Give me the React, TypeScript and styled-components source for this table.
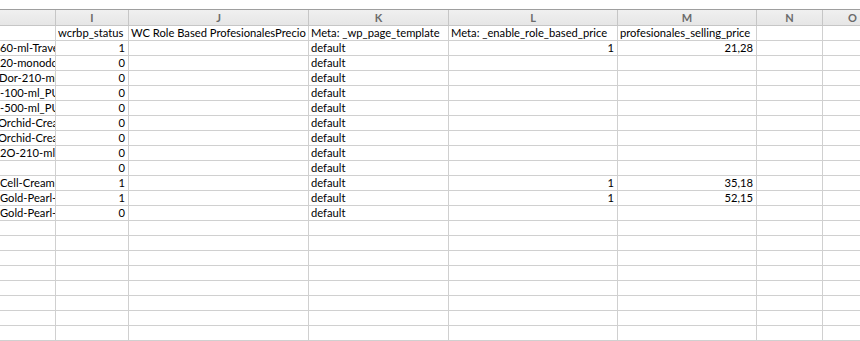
import React from 'react'
import styled, { createGlobalStyle } from 'styled-components'

const GlobalStyle = createGlobalStyle`
  html, body {
    margin: 0;
    padding: 0;
    background: #fff;
  }
`

const columns = [
  { key: 'H', width: 56 },
  { key: 'I', width: 73 },
  { key: 'J', width: 180 },
  { key: 'K', width: 140 },
  { key: 'L', width: 169 },
  { key: 'M', width: 139 },
  { key: 'N', width: 66 },
  { key: 'O', width: 60 },
]

type Cell = { text?: string; align?: 'left' | 'right'; shift?: number }

const fieldRow: Cell[] = [
  {},
  { text: 'wcrbp_status' },
  { text: 'WC Role Based ProfesionalesPrecio' },
  { text: 'Meta: _wp_page_template' },
  { text: 'Meta: _enable_role_based_price' },
  { text: 'profesionales_selling_price' },
  {},
  {},
]

// H column is scrolled, so its text is clipped on both sides
const data: [string, number, string, number | null, string | null, number][] = [
  ['60-ml-Travel', 1, 'default', 1, '21,28', -2],
  ['20-monodosis', 0, 'default', null, null, -2],
  ['Dor-210-ml-', 0, 'default', null, null, -3],
  ['-100-ml_PURE', 0, 'default', null, null, -2],
  ['-500-ml_PURE', 0, 'default', null, null, -2],
  ['Orchid-Cream', 0, 'default', null, null, -4],
  ['Orchid-Cream', 0, 'default', null, null, -4],
  ['2O-210-ml_PURE', 0, 'default', null, null, -2],
  ['', 0, 'default', null, null, -2],
  ['Cell-Cream-50', 1, 'default', 1, '35,18', -2],
  ['Gold-Pearl-30', 1, 'default', 1, '52,15', -2],
  ['Gold-Pearl-50', 0, 'default', null, null, -2],
]

const rows: Cell[][] = [
  fieldRow,
  ...data.map(([name, status, tpl, enable, price, shift]) => [
    { text: name, shift },
    { text: String(status), align: 'right' as const },
    {},
    { text: tpl },
    { text: enable === null ? undefined : String(enable), align: 'right' as const },
    { text: price ?? undefined, align: 'right' as const },
    {},
    {},
  ]),
  ...Array.from({ length: 9 }, () => columns.map(() => ({}))),
]

const App = () => {
  return (
    <>
      <GlobalStyle />
      <Sheet>
        <HeaderRow>
          {columns.map((c) => (
            <HeaderCell key={c.key} $w={c.width}>
              {c.key === 'H' ? '' : c.key}
            </HeaderCell>
          ))}
        </HeaderRow>
        {rows.map((row, ri) => (
          <Row key={ri}>
            {row.map((cell, ci) => (
              <DataCell key={ci} $w={columns[ci].width} $align={cell.align ?? 'left'}>
                {cell.text && <CellText $shift={cell.shift ?? 0}>{cell.text}</CellText>}
              </DataCell>
            ))}
          </Row>
        ))}
      </Sheet>
    </>
  )
}

export default App

const Sheet = styled.div`
  width: 860px;
  height: 341px;
  overflow: hidden;
  padding-top: 9px;
  box-sizing: border-box;
  font-family: Lato, 'Liberation Sans', sans-serif;
  font-size: 11.2px;
  color: #000;
`

const HeaderRow = styled.div`
  display: flex;
  height: 17px;
  box-sizing: border-box;
  border-top: 1px solid #9e9e9e;
  border-bottom: 1px solid #c6c6c6;
  background: linear-gradient(#f0f0f0, #e6e6e6);
`

const HeaderCell = styled.div<{ $w: number }>`
  flex: 0 0 ${(p) => p.$w}px;
  box-sizing: border-box;
  border-right: 1px solid #c6c6c6;
  text-align: center;
  font-weight: 700;
  font-size: 11px;
  line-height: 15px;
  color: #6a6a6a;
`

const Row = styled.div`
  display: flex;
  height: 15px;
  box-sizing: border-box;
  border-bottom: 1px solid #d0d0d0;
`

const DataCell = styled.div<{ $w: number; $align: 'left' | 'right' }>`
  flex: 0 0 ${(p) => p.$w}px;
  box-sizing: border-box;
  border-right: 1px solid #d0d0d0;
  overflow: hidden;
  white-space: nowrap;
  line-height: 14px;
  text-align: ${(p) => p.$align};
  padding: ${(p) => (p.$align === 'right' ? '0 3px 0 0' : '0 0 0 2px')};
`

const CellText = styled.span<{ $shift: number }>`
  display: inline-block;
  margin-left: ${(p) => p.$shift}px;
`
